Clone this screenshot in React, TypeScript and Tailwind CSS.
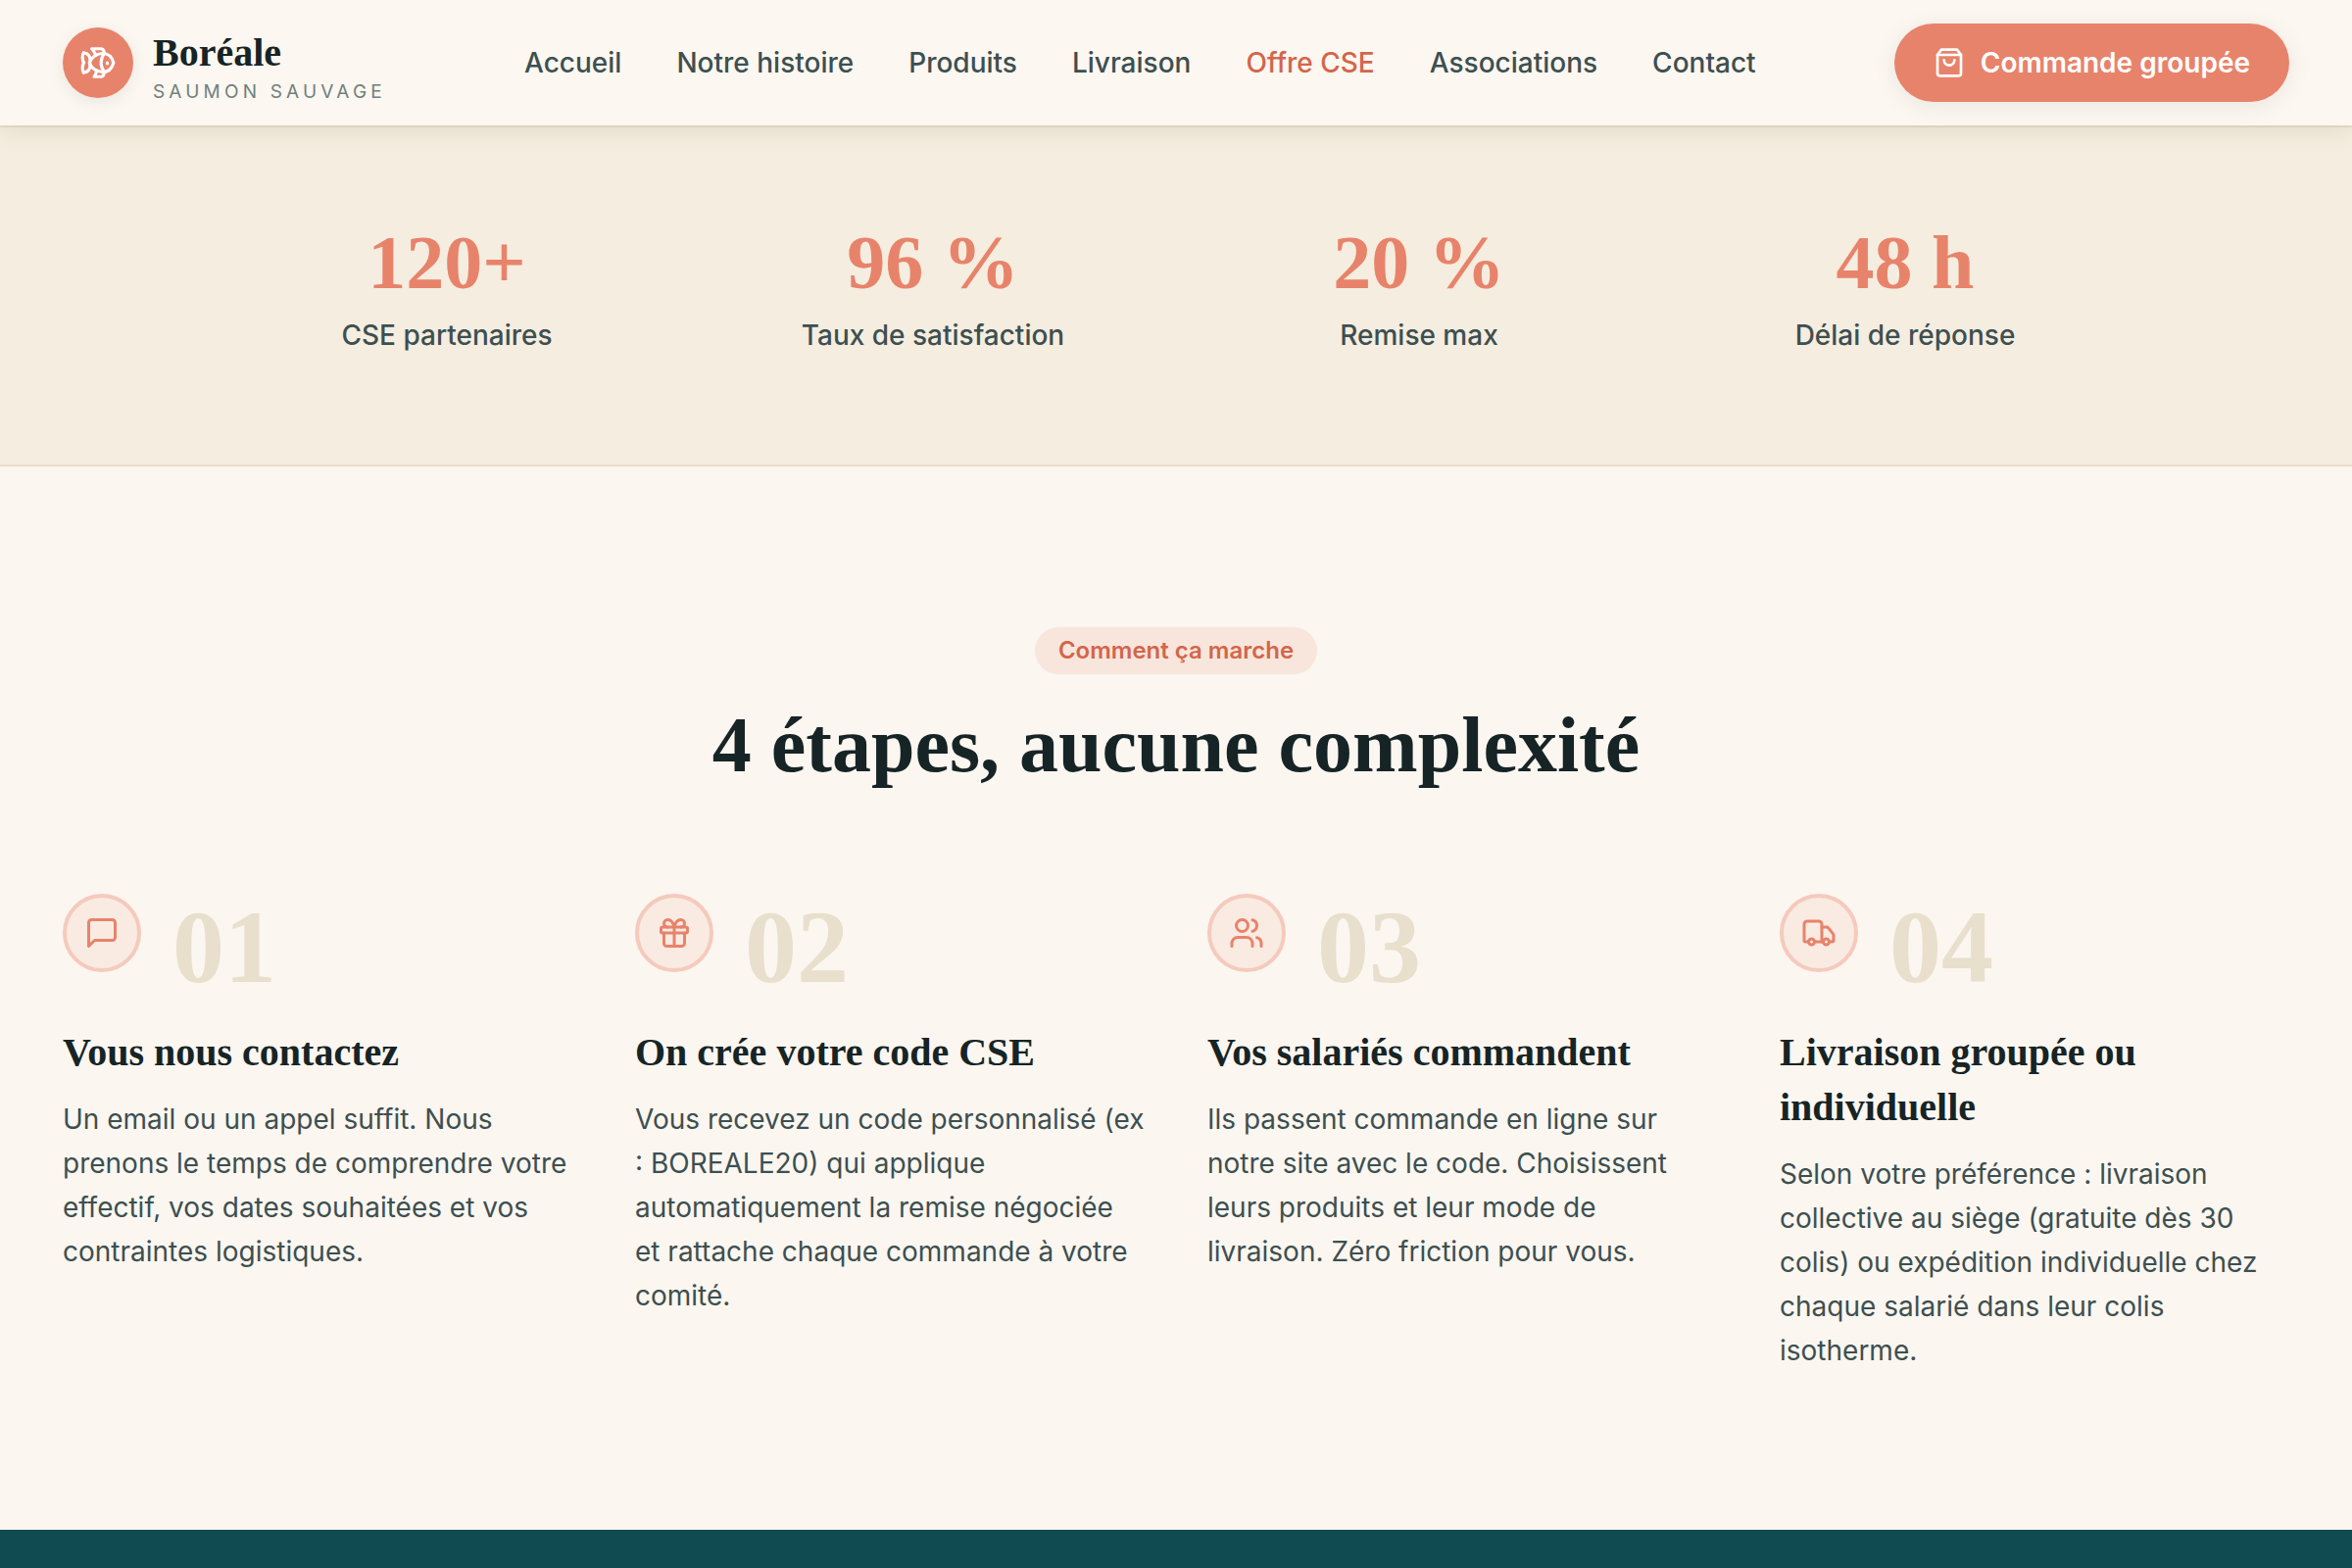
import type { ReactNode } from 'react';

interface Step {
  number: string;
  title: string;
  text: string;
  icon: ReactNode;
}

const navLinks = [
  { label: 'Accueil', href: '#accueil' },
  { label: 'Notre histoire', href: '#histoire' },
  { label: 'Produits', href: '#produits' },
  { label: 'Livraison', href: '#livraison' },
  { label: 'Offre CSE', href: '#cse', active: true },
  { label: 'Associations', href: '#associations' },
  { label: 'Contact', href: '#contact' },
];

const stats = [
  { value: '120+', label: 'CSE partenaires' },
  { value: '96 %', label: 'Taux de satisfaction' },
  { value: '20 %', label: 'Remise max' },
  { value: '48 h', label: 'Délai de réponse' },
];

const steps: Step[] = [
  {
    number: '01',
    title: 'Vous nous contactez',
    text: 'Un email ou un appel suffit. Nous prenons le temps de comprendre votre effectif, vos dates souhaitées et vos contraintes logistiques.',
    icon: <path d="M21 15a2 2 0 0 1-2 2H7l-4 4V5a2 2 0 0 1 2-2h14a2 2 0 0 1 2 2z" />,
  },
  {
    number: '02',
    title: 'On crée votre code CSE',
    text: 'Vous recevez un code personnalisé (ex : BOREALE20) qui applique automatiquement la remise négociée et rattache chaque commande à votre comité.',
    icon: (
      <>
        <rect x="3" y="8" width="18" height="4" rx="1" />
        <path d="M12 8v13" />
        <path d="M19 12v7a2 2 0 0 1-2 2H7a2 2 0 0 1-2-2v-7" />
        <path d="M7.5 8a2.5 2.5 0 0 1 0-5A4.8 8 0 0 1 12 8a4.8 8 0 0 1 4.5-5 2.5 2.5 0 0 1 0 5" />
      </>
    ),
  },
  {
    number: '03',
    title: 'Vos salariés commandent',
    text: 'Ils passent commande en ligne sur notre site avec le code. Choisissent leurs produits et leur mode de livraison. Zéro friction pour vous.',
    icon: (
      <>
        <path d="M16 21v-2a4 4 0 0 0-4-4H6a4 4 0 0 0-4 4v2" />
        <circle cx="9" cy="7" r="4" />
        <path d="M22 21v-2a4 4 0 0 0-3-3.87" />
        <path d="M16 3.13a4 4 0 0 1 0 7.75" />
      </>
    ),
  },
  {
    number: '04',
    title: 'Livraison groupée ou individuelle',
    text: 'Selon votre préférence : livraison collective au siège (gratuite dès 30 colis) ou expédition individuelle chez chaque salarié dans leur colis isotherme.',
    icon: (
      <>
        <path d="M14 18V6a2 2 0 0 0-2-2H4a2 2 0 0 0-2 2v11a1 1 0 0 0 1 1h2" />
        <path d="M15 18H9" />
        <path d="M19 18h2a1 1 0 0 0 1-1v-3.65a1 1 0 0 0-.22-.624l-3.48-4.35A1 1 0 0 0 17.52 8H14" />
        <circle cx="17" cy="18" r="2" />
        <circle cx="7" cy="18" r="2" />
      </>
    ),
  },
];

function Icon({ size, children }: { size: number; children: ReactNode }) {
  return (
    <svg
      width={size}
      height={size}
      viewBox="0 0 24 24"
      fill="none"
      stroke="currentColor"
      strokeWidth="2"
      strokeLinecap="round"
      strokeLinejoin="round"
      aria-hidden="true"
    >
      {children}
    </svg>
  );
}

function Header() {
  return (
    <header className="relative z-10 flex h-32 items-center justify-between bg-[#fcf7f0] px-16 shadow-[0_4px_24px_rgba(70,76,40,0.12)]">
      <a href="#accueil" className="flex items-center gap-5">
        <span className="flex size-18 items-center justify-center rounded-full bg-[#e8836b] text-white shadow-[0_4px_16px_rgba(22,36,38,0.08)]">
          <Icon size={38}>
            <path d="M6.5 12c.94-3.46 4.94-6 8.5-6 3.56 0 6.06 2.54 7 6-.94 3.47-3.44 6-7 6s-7.56-2.53-8.5-6Z" />
            <path d="M18 12v.5" />
            <path d="M16 17.93a9.77 9.77 0 0 1 0-11.86" />
            <path d="M7 10.67C7 8 5.58 5.97 2.73 5.5c-1 1.5-1 5 .23 6.5-1.24 1.5-1.24 5-.23 6.5C5.58 18.03 7 16 7 13.33" />
            <path d="M10.46 7.26C10.2 5.88 9.17 4.24 8 3h5.8a2 2 0 0 1 1.98 1.67l.23 1.4" />
            <path d="m16.01 17.93-.23 1.4A2 2 0 0 1 13.8 21H9.5a5.96 5.96 0 0 0 1.49-3.98" />
          </Icon>
        </span>
        <span className="flex flex-col pt-5">
          <span className="font-['Liberation_Serif',serif] text-[40px] leading-10 font-bold text-[#162426]">Boréale</span>
          <span className="text-[19px] leading-10 tracking-[0.22em] text-[#6f807e] uppercase">Saumon sauvage</span>
        </span>
      </a>

      <nav className="flex items-center gap-14">
        {navLinks.map((link) => (
          <a
            key={link.label}
            href={link.href}
            className={`text-[28px] leading-10 font-medium ${link.active ? 'text-[#d4654a]' : 'text-[#3d4f51]'}`}
          >
            {link.label}
          </a>
        ))}
      </nav>

      <button
        type="button"
        className="flex h-20 items-center gap-4 rounded-full bg-[#e8836b] px-10 text-[28px] font-semibold text-white shadow-[0_4px_24px_rgba(22,36,38,0.08)]"
      >
        <Icon size={32}>
          <path d="M6 2 3 6v14a2 2 0 0 0 2 2h14a2 2 0 0 0 2-2V6l-3-4Z" />
          <path d="M3 6h18" />
          <path d="M16 10a4 4 0 0 1-8 0" />
        </Icon>
        Commande groupée
      </button>
    </header>
  );
}

function Stats() {
  return (
    <section className="border-y-2 border-[#e8dfcd] bg-[#f5eddf] pt-24 pb-28">
      <div className="mx-auto grid max-w-[1920px] grid-cols-4 gap-16">
        {stats.map((stat) => (
          <div key={stat.label} className="text-center">
            <p className="font-['Liberation_Serif',serif] text-[78px] leading-[84px] font-bold text-[#e8836b]">{stat.value}</p>
            <p className="mt-3 text-[28px] leading-10 font-medium text-[#3d4f51]">{stat.label}</p>
          </div>
        ))}
      </div>
    </section>
  );
}

function StepCard({ step }: { step: Step }) {
  return (
    <li>
      <div className="flex items-start gap-8">
        <span className="flex size-20 shrink-0 items-center justify-center rounded-full border-4 border-[#f5cabd] bg-[#f9ebe2] text-[#e8836b]">
          <Icon size={36}>{step.icon}</Icon>
        </span>
        <span className="font-['Liberation_Serif',serif] text-[106px] leading-[110px] font-bold text-[#e8dfcd]">
          {step.number}
        </span>
      </div>
      <h3 className="mt-6 font-['Liberation_Serif',serif] text-[40px] leading-14 font-bold text-[#162426]">{step.title}</h3>
      <p className="mt-[18px] text-[28px] leading-[45px] text-[#3d4f51]">{step.text}</p>
    </li>
  );
}

function Steps() {
  return (
    <section className="bg-[#fbf6ef] px-16 pt-41 pb-40">
      <div className="flex flex-col items-center">
        <span className="rounded-full bg-[#f8e6dd] px-6 py-2 text-[24px] leading-8 font-semibold text-[#d4654a]">
          Comment ça marche
        </span>
        <h2 className="mt-6 font-['Liberation_Serif',serif] text-[80px] leading-24 font-bold text-[#162426]">
          4 étapes, aucune complexité
        </h2>
      </div>
      <ol className="mt-26 grid grid-cols-4 gap-16">
        {steps.map((step) => (
          <StepCard key={step.number} step={step} />
        ))}
      </ol>
    </section>
  );
}

export default function App() {
  return (
    <div className="flex min-h-screen flex-col bg-[#114b52] font-[Inter,sans-serif]">
      <Header />
      <main>
        <Stats />
        <Steps />
      </main>
    </div>
  );
}
